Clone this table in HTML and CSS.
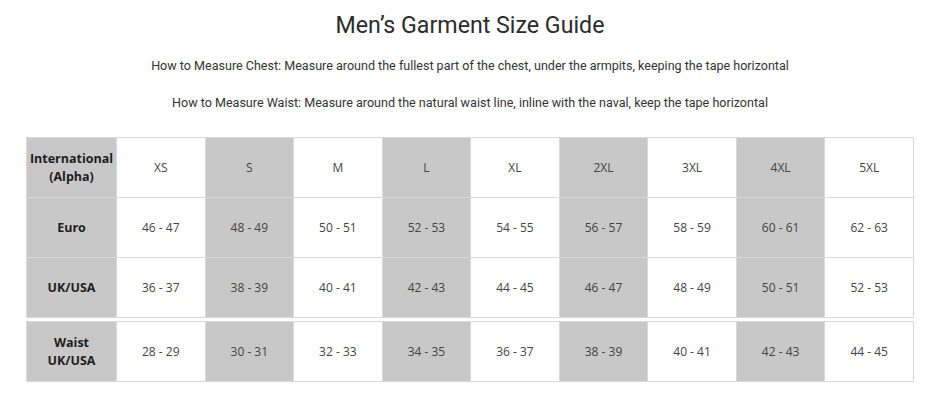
FILE: index.html
```html
<!DOCTYPE html>
<html>
<head>
<meta charset="utf-8">
<link rel="stylesheet" href="styles.css">
</head>
<body>
<div class="page">
  <h1 class="title">Men’s Garment Size Guide</h1>
  <p class="note first">How to Measure Chest: Measure around the fullest part of the chest, under the armpits, keeping the tape horizontal</p>
  <p class="note">How to Measure Waist: Measure around the natural waist line, inline with the naval, keep the tape horizontal</p>
  <table class="sizes">
    <colgroup><col class="c-label"><col><col><col><col><col><col><col><col><col></colgroup>
    <tr>
      <th>International<br>(Alpha)</th>
      <td>XS</td><td class="g">S</td><td>M</td><td class="g">L</td><td>XL</td><td class="g">2XL</td><td>3XL</td><td class="g">4XL</td><td>5XL</td>
    </tr>
    <tr>
      <th>Euro</th>
      <td>46 - 47</td><td class="g">48 - 49</td><td>50 - 51</td><td class="g">52 - 53</td><td>54 - 55</td><td class="g">56 - 57</td><td>58 - 59</td><td class="g">60 - 61</td><td>62 - 63</td>
    </tr>
    <tr>
      <th>UK/USA</th>
      <td>36 - 37</td><td class="g">38 - 39</td><td>40 - 41</td><td class="g">42 - 43</td><td>44 - 45</td><td class="g">46 - 47</td><td>48 - 49</td><td class="g">50 - 51</td><td>52 - 53</td>
    </tr>
  </table>
  <table class="sizes waist">
    <colgroup><col class="c-label"><col><col><col><col><col><col><col><col><col></colgroup>
    <tr>
      <th>Waist<br>UK/USA</th>
      <td>28 - 29</td><td class="g">30 - 31</td><td>32 - 33</td><td class="g">34 - 35</td><td>36 - 37</td><td class="g">38 - 39</td><td>40 - 41</td><td class="g">42 - 43</td><td>44 - 45</td>
    </tr>
  </table>
</div>
</body>
</html>
```
FILE: styles.css
```css
html, body {
  margin: 0;
  padding: 0;
  background: #fff;
}
.page {
  padding: 10px 0 0 26px;
  width: 888px;
}
.title {
  margin: 0;
  font-family: Roboto, "Liberation Sans", sans-serif;
  font-weight: 400;
  font-size: 23.2px;
  line-height: 31px;
  color: #2b2b2b;
  text-align: center;
}
.note {
  margin: 0;
  font-family: Roboto, "Liberation Sans", sans-serif;
  font-size: 12.55px;
  line-height: 16px;
  color: #333;
  text-align: center;
}
.note.first {
  margin-top: 17px;
  margin-bottom: 21px;
}
.sizes {
  width: 888px;
  table-layout: fixed;
  border-collapse: collapse;
  margin-top: 26px;
  font-family: "Open Sans", "Noto Sans", sans-serif;
  font-size: 12px;
}
.sizes.waist {
  margin-top: 3px;
}
.c-label {
  width: 90px;
}
.sizes th, .sizes td {
  height: 59px;
  padding: 0;
  border: 1px solid #d9d9d9;
  text-align: center;
  vertical-align: middle;
  line-height: 18px;
}
.sizes th {
  background: #c8c8c8;
  color: #1e1e1e;
  font-weight: 700;
  font-size: 12.5px;
}
.sizes td {
  color: #444;
  font-weight: 400;
}
.sizes td.g {
  background: #c8c8c8;
}
```
